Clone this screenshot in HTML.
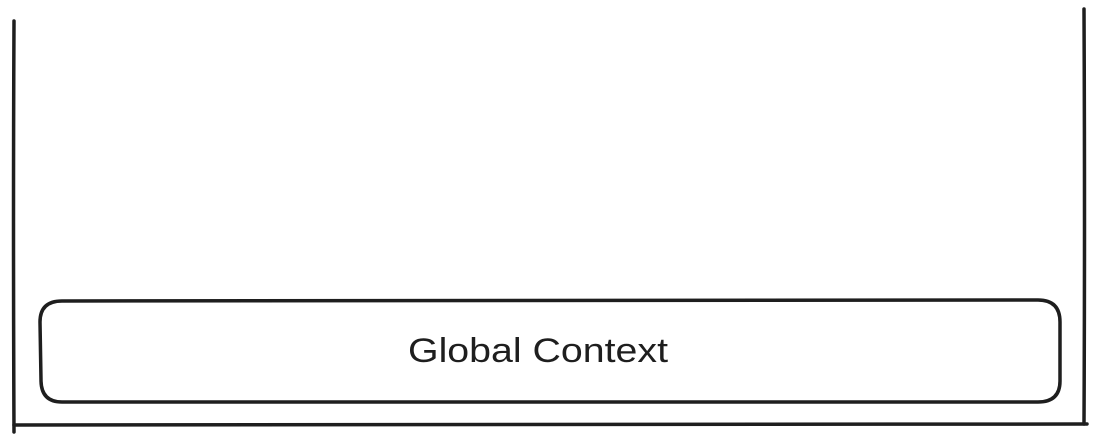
<!DOCTYPE html>
<html><head><style>html,body{margin:0;padding:0;background:#fff;width:1108px;height:444px;overflow:hidden}</style></head>
<body>
<svg width="1108" height="444" viewBox="0 0 1108 444" xmlns="http://www.w3.org/2000/svg">
<g fill="none" stroke="#1e1e1e" stroke-width="3.5" stroke-linecap="round">
<path d="M14 21 Q13 220 14 432"/>
<path d="M14 425 Q550 424 1087 424"/>
<path d="M1084 9 Q1085 220 1084 424"/>
<path d="M62 301 L1038 300 Q1060 300 1060 322 L1060 381 Q1060 402 1038 402 L62 402 Q41 402 41 380 L40 322 Q40 301 62 301 Z"/>
</g>
<text x="408" y="362" textLength="260" lengthAdjust="spacingAndGlyphs" font-family="Liberation Sans, sans-serif" font-size="34" fill="#1e1e1e">Global Context</text>
</svg>
</body></html>
